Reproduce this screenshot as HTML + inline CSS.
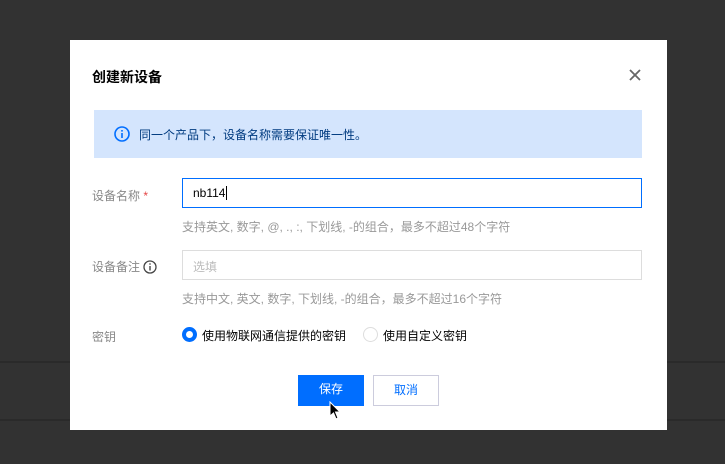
<!DOCTYPE html>
<html><head><meta charset="utf-8"><style>
*{margin:0;padding:0;box-sizing:border-box}
body{width:725px;height:464px;background:#323232;position:relative;overflow:hidden;font-family:"Liberation Sans","Noto Sans CJK SC",sans-serif;font-size:12px}
.ln{position:absolute;left:0;width:725px;height:2px;background:#2a2a2a}
.dlg{position:absolute;left:70px;top:40px;width:597px;height:390px;background:#fff}
.t{position:absolute;left:22px;top:27px;font-size:14px;font-weight:bold;color:#000}
.x{position:absolute;left:558px;top:28px}
.info{position:absolute;left:24px;top:70px;width:548px;height:48px;background:#d4e5fd}
.info span{position:absolute;left:45px;top:16px;color:#003b80}
.lab{position:absolute;left:22px;color:#888}
.inp{position:absolute;left:112px;width:460px;height:30px;border:1px solid #ddd;padding:7px 10px;color:#000}
.hint{position:absolute;left:112px;color:#999}
.btn{position:absolute;top:335px;width:66px;height:31px;text-align:center;line-height:29px}
</style></head><body>
<div class="ln" style="top:361px"></div>
<div class="ln" style="top:419px"></div>
<div class="dlg">
<div class="t">创建新设备</div>
<svg class="x" width="14" height="14" viewBox="0 0 14 14"><path d="M2 2L12 12M12 2L2 12" stroke="#666" stroke-width="1.8"/></svg>
<div class="info">
<svg style="position:absolute;left:20px;top:16px" width="16" height="16" viewBox="0 0 16 16"><circle cx="8" cy="8" r="7" fill="none" stroke="#006eff" stroke-width="1.6"/><rect x="7.2" y="7" width="1.6" height="5" fill="#006eff"/><rect x="7.2" y="4" width="1.6" height="1.6" fill="#006eff"/></svg>
<span>同一个产品下，设备名称需要保证唯一性。</span></div>
<div class="lab" style="top:147px">设备名称 <span style="color:#e54545">*</span></div>
<div class="inp" style="top:138px;border-color:#006eff">nb114<span style="border-left:1px solid #000;margin-left:1px"></span></div>
<div class="hint" style="top:178px">支持英文, 数字, @, ., :, 下划线, -的组合，最多不超过48个字符</div>
<div class="lab" style="top:218px">设备备注 <svg style="vertical-align:-3px" width="14" height="14" viewBox="0 0 14 14"><circle cx="7" cy="7" r="6" fill="none" stroke="#444" stroke-width="1.3"/><rect x="6.3" y="6" width="1.4" height="4.5" fill="#444"/><rect x="6.3" y="3.3" width="1.4" height="1.4" fill="#444"/></svg></div>
<div class="inp" style="top:210px;color:#bbb">选填</div>
<div class="hint" style="top:250px">支持中文, 英文, 数字, 下划线, -的组合，最多不超过16个字符</div>
<div class="lab" style="top:288px">密钥</div>
<div style="position:absolute;left:112px;top:287px;width:15px;height:15px;border:4px solid #006eff;border-radius:50%"></div>
<div style="position:absolute;left:132px;top:287px;color:#000">使用物联网通信提供的密钥</div>
<div style="position:absolute;left:293px;top:287px;width:15px;height:15px;border:1px solid #ddd;border-radius:50%"></div>
<div style="position:absolute;left:313px;top:287px;color:#000">使用自定义密钥</div>
<div class="btn" style="left:228px;background:#006eff;color:#fff">保存</div>
<div class="btn" style="left:303px;border:1px solid #ccd;color:#006eff">取消</div>
<svg style="position:absolute;left:259px;top:361px" width="12" height="19" viewBox="0 0 12 19"><path d="M1 1L1 15L4.5 12L7 18L9 17L6.5 11L11 11Z" fill="#000" stroke="#fff" stroke-width="1"/></svg>
</div>
</body></html>
